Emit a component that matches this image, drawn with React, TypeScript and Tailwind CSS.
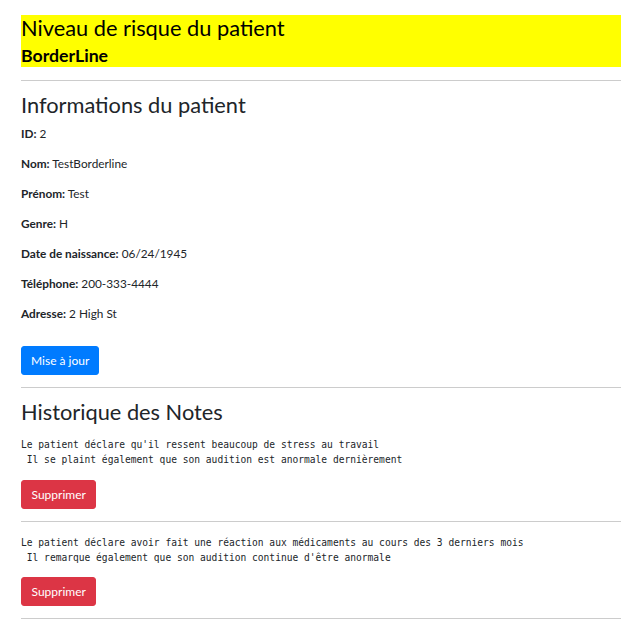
const info: [string, string][] = [
  ["ID:", "2"],
  ["Nom:", "TestBorderline"],
  ["Prénom:", "Test"],
  ["Genre:", "H"],
  ["Date de naissance:", "06/24/1945"],
  ["Téléphone:", "200-333-4444"],
  ["Adresse:", "2 High St"],
];

const notes: string[] = [
  "Le patient déclare qu'il ressent beaucoup de stress au travail\n Il se plaint également que son audition est anormale dernièrement",
  "Le patient déclare avoir fait une réaction aux médicaments au cours des 3 derniers mois\n Il remarque également que son audition continue d'être anormale",
];

function Rule({ className = "" }: { className?: string }) {
  return <div className={`h-px w-full bg-[#cccccc] ${className}`} />;
}

function DeleteButton() {
  return (
    <button className="flex h-[29px] items-center rounded-[3px] border border-[#dc3545] bg-[#dc3545] px-[9.5px] text-[12px] leading-[18px] text-white">
      Supprimer
    </button>
  );
}

export default function App() {
  return (
    <div className="h-[620px] overflow-hidden bg-white font-['Lato',sans-serif] text-[#212529]">
      <div className="mx-auto w-[600px] pt-[15px]">
        <div className="bg-[#ffff00] text-black">
          <h3 className="mb-[5px] text-[21.8px] leading-[25px] font-normal">Niveau de risque du patient</h3>
          <h4 className="text-[17.7px] leading-[22px] font-bold">BorderLine</h4>
        </div>

        <Rule className="mt-[13px]" />

        <h3 className="mt-[11px] mb-[8px] text-[21.8px] leading-[25px] font-normal">Informations du patient</h3>
        <div className="flex flex-col gap-[12px] text-[11.8px] leading-[18px]">
          {info.map(([label, value]) => (
            <p key={label}>
              <span className="font-bold">{label}</span> {value}
            </p>
          ))}
        </div>

        <button className="mt-[23px] flex h-[29px] items-center rounded-[3px] border border-[#007bff] bg-[#007bff] px-[9px] text-[12px] leading-[18px] text-white">
          Mise à jour
        </button>

        <Rule className="mt-[12px]" />

        <h3 className="mt-[11px] mb-[13px] text-[21.8px] leading-[25px] font-normal">Historique des Notes</h3>

        {notes.map((n, i) => (
          <div key={i} className={i > 0 ? "pt-[13px]" : ""}>
            <pre className={`font-['DejaVu_Sans_Mono',monospace] text-[9.6px] leading-[15px] whitespace-pre ${i > 0 ? "mb-[12px]" : "mb-[13px]"}`}>{n}</pre>
            <DeleteButton />
            <Rule className="mt-[12px]" />
          </div>
        ))}
      </div>
    </div>
  );
}
